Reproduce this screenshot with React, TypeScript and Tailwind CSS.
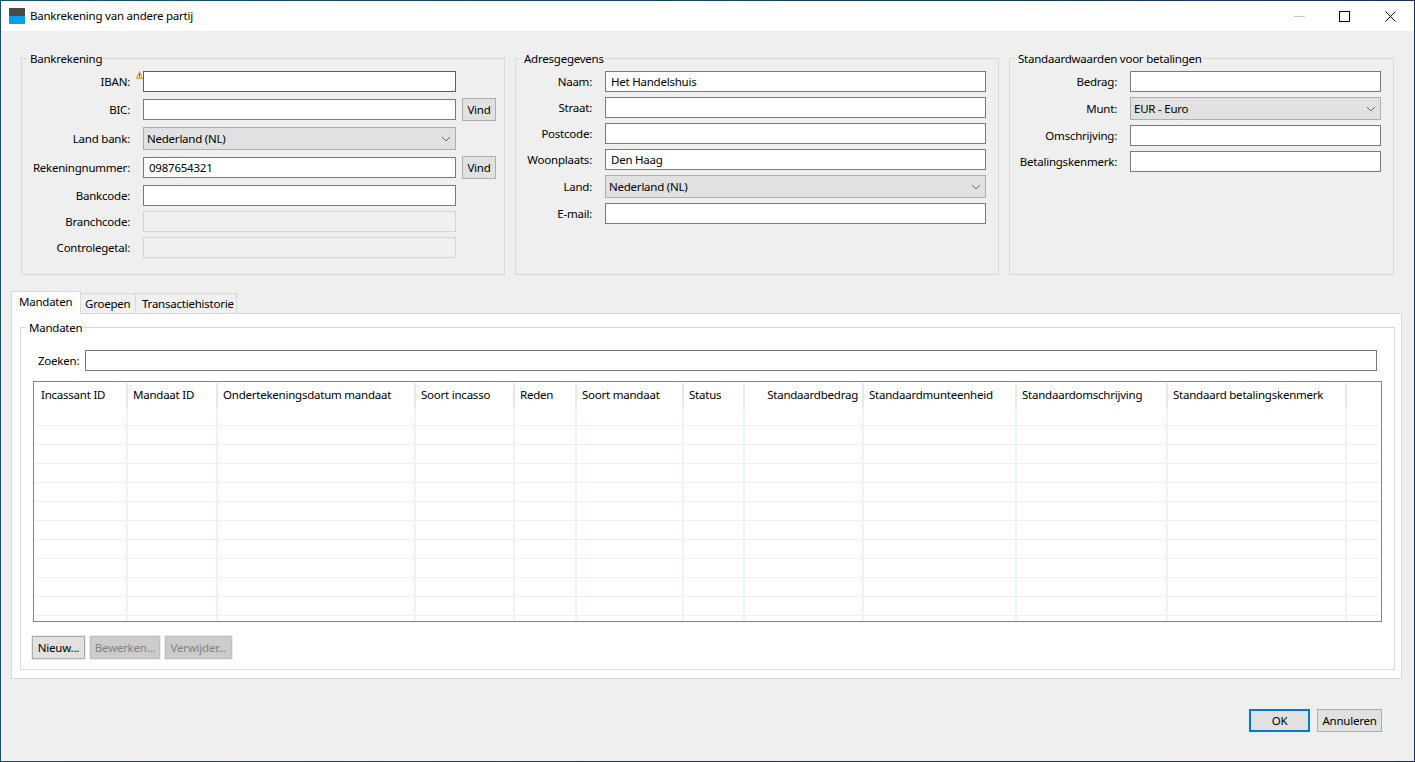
import React from "react";

function Chevron() {
  return (
    <svg width="10" height="6" viewBox="0 0 10 6" fill="none" className="shrink-0">
      <path d="M1 1l4 4 4-4" stroke="#6a6a6a" strokeWidth="1" />
    </svg>
  );
}

function TextBox({ value = "", className = "", focused = false, disabled = false }: { value?: string; className?: string; focused?: boolean; disabled?: boolean }) {
  const tone = disabled ? "border-[#d4d4d4] bg-[#f0f0f0]" : focused ? "border-[#0078d7] bg-white" : "border-[#7a7a7a] bg-white";
  return <input readOnly value={value} className={`h-[21px] border pl-[5px] text-black outline-none ${tone} ${className}`} />;
}

function Select({ value, className = "" }: { value: string; className?: string }) {
  return (
    <div className={`flex h-[23px] items-center justify-between border border-[#adadad] bg-[#e1e1e1] pl-[3px] pr-[4px] text-black ${className}`}>
      <span>{value}</span>
      <Chevron />
    </div>
  );
}

function Row({ label, labelW, className = "", gap, children }: { label: string; labelW: string; className?: string; gap: string; children: React.ReactNode }) {
  return (
    <div className={`flex h-[21px] items-center ${className}`}>
      <span className={`shrink-0 whitespace-nowrap text-right ${labelW} ${gap}`}>{label}</span>
      {children}
    </div>
  );
}

function Group({ title, className, children }: { title: string; className: string; children: React.ReactNode }) {
  return (
    <fieldset className={`border border-[#d9d9d9] ${className}`}>
      <legend className="ml-[5px] h-[17px] pl-[3px] pr-[1px] leading-[17px]">{title}</legend>
      {children}
    </fieldset>
  );
}

function Btn({ children, className = "border-[#adadad] bg-[#e1e1e1]" }: { children: React.ReactNode; className?: string }) {
  return <div className={`flex h-[23px] shrink-0 items-center justify-center border ${className}`}>{children}</div>;
}

const cols = "grid grid-cols-[93px_90px_198px_99px_62px_107px_61px_119px_153px_151px_179px_1fr]";
const headers = ["Incassant ID", "Mandaat ID", "Ondertekeningsdatum mandaat", "Soort incasso", "Reden", "Soort mandaat", "Status", "Standaardbedrag", "Standaardmunteenheid", "Standaardomschrijving", "Standaard betalingskenmerk", ""];

export default function App() {
  const l1 = "w-[108px]";
  const g1 = "mr-[13px]";
  const l2 = "w-[76px]";
  const g2 = "mr-[13px]";
  const l3 = "w-[107px]";
  const g3 = "mr-[13px]";
  return (
    <div className="h-[762px] w-[1415px] overflow-hidden bg-gradient-to-r from-[#125270] to-[#1a2f60] p-px font-['Noto_Sans','Open_Sans',sans-serif] text-[11.5px] tracking-[-0.23px] text-black">
      <div className="flex h-[760px] flex-col bg-[#efefef]">
        <div className="flex h-[30px] shrink-0 items-center bg-white pl-[8px]">
          <div className="flex h-[16px] w-[16px] flex-col">
            <div className="h-[8px] bg-[#4a4a4a]" />
            <div className="h-[8px] bg-[#00a2e8]" />
          </div>
          <span className="ml-[5px]">Bankrekening van andere partij</span>
          <div className="ml-auto flex items-center pr-[18px]">
            <svg width="11" height="11" viewBox="0 0 11 11" className="mr-[34px]"><path d="M0 5.5h11" stroke="#c8c8c8" /></svg>
            <svg width="11" height="11" viewBox="0 0 11 11" className="mr-[35px]"><rect x="0.5" y="0.5" width="10" height="10" fill="none" stroke="#000" /></svg>
            <svg width="11" height="11" viewBox="0 0 11 11"><path d="M0.5 0.5l10 10M10.5 0.5l-10 10" stroke="#000" /></svg>
          </div>
        </div>

        <div className="ml-[20px] mt-[19px] flex gap-[10px]">
          <Group title="Bankrekening" className="relative h-[225px] w-[484px] pt-[4px]">
            <svg width="7" height="8" viewBox="0 0 7 8" className="absolute left-[114px] top-[4px]">
              <path d="M3.5 0.6L6.5 7.4H0.5Z" fill="#fbe3a4" stroke="#d9983a" strokeWidth="1" strokeLinejoin="round" />
              <path d="M3.5 2.6v2.4M3.5 5.7v1" stroke="#7a5214" strokeWidth="1" />
            </svg>
            <Row label="IBAN:" labelW={l1} gap={g1}><TextBox focused className="w-[313px]" /></Row>
            <Row label="BIC:" labelW={l1} gap={g1} className="mt-[7px]">
              <TextBox className="w-[313px]" />
              <div className="ml-[6px]"><Btn className="w-[34px] border-[#adadad] bg-[#e1e1e1]">Vind</Btn></div>
            </Row>
            <Row label="Land bank:" labelW={l1} gap={g1} className="mt-[8px]"><Select value="Nederland (NL)" className="w-[313px]" /></Row>
            <Row label="Rekeningnummer:" labelW={l1} gap={g1} className="mt-[8px]">
              <TextBox value="0987654321" className="w-[313px]" />
              <div className="ml-[6px]"><Btn className="w-[34px] border-[#adadad] bg-[#e1e1e1]">Vind</Btn></div>
            </Row>
            <Row label="Bankcode:" labelW={l1} gap={g1} className="mt-[7px]"><TextBox className="w-[313px]" /></Row>
            <Row label="Branchcode:" labelW={l1} gap={g1} className="mt-[5px]"><TextBox disabled className="w-[313px]" /></Row>
            <Row label="Controlegetal:" labelW={l1} gap={g1} className="mt-[5px]"><TextBox disabled className="w-[313px]" /></Row>
          </Group>

          <Group title="Adresgegevens" className="h-[225px] w-[484px] pt-[4px]">
            <Row label="Naam:" labelW={l2} gap={g2}><TextBox value="Het Handelshuis" className="w-[381px]" /></Row>
            <Row label="Straat:" labelW={l2} gap={g2} className="mt-[5px]"><TextBox className="w-[381px]" /></Row>
            <Row label="Postcode:" labelW={l2} gap={g2} className="mt-[5px]"><TextBox className="w-[381px]" /></Row>
            <Row label="Woonplaats:" labelW={l2} gap={g2} className="mt-[5px]"><TextBox value="Den Haag" className="w-[381px]" /></Row>
            <Row label="Land:" labelW={l2} gap={g2} className="mt-[6px]"><Select value="Nederland (NL)" className="w-[381px]" /></Row>
            <Row label="E-mail:" labelW={l2} gap={g2} className="mt-[6px]"><TextBox className="w-[381px]" /></Row>
          </Group>

          <Group title="Standaardwaarden voor betalingen" className="h-[225px] w-[385px] pt-[4px]">
            <Row label="Bedrag:" labelW={l3} gap={g3}><TextBox className="w-[251px]" /></Row>
            <Row label="Munt:" labelW={l3} gap={g3} className="mt-[6px]"><Select value="EUR - Euro" className="w-[251px]" /></Row>
            <Row label="Omschrijving:" labelW={l3} gap={g3} className="mt-[6px]"><TextBox className="w-[251px]" /></Row>
            <Row label="Betalingskenmerk:" labelW={l3} gap={g3} className="mt-[5px]"><TextBox className="w-[251px]" /></Row>
          </Group>
        </div>

        <div className="relative z-10 ml-[10px] mt-[16px] flex h-[22px] items-end">
          <div className="-mb-px h-[23px] w-[70px] border border-b-0 border-[#d9d9d9] bg-white pl-[7px] leading-[20px]">Mandaten</div>
          <div className="h-[20px] w-[55px] border border-l-0 border-b-0 border-[#d9d9d9] bg-[#f0f0f0] pl-[4px] leading-[20px]">Groepen</div>
          <div className="h-[20px] w-[101px] border border-l-0 border-b-0 border-[#d9d9d9] bg-[#f0f0f0] pl-[6px] leading-[20px]">Transactiehistorie</div>
        </div>

        <div className="ml-[10px] h-[366px] w-[1391px] border border-[#d9d9d9] bg-white pl-[8px] pt-[5px]">
          <Group title="Mandaten" className="h-[351px] w-[1375px]">
            <div className="mt-[14px] flex h-[21px] items-center pl-[17px]">
              <span className="mr-[5px] w-[42px] shrink-0 whitespace-nowrap">Zoeken:</span>
              <TextBox className="w-[1292px]" />
            </div>
            <div className="ml-[12px] mt-[10px] h-[241px] w-[1349px] overflow-hidden border border-[#82828a] bg-white px-px">
              <div className={`${cols} h-[25px] pt-px`}>
                {headers.map((h, i) => (
                  <div key={i} className={`flex items-center whitespace-nowrap ${i === 11 ? "" : "border-r-2 border-[#e8e8e8]"} ${i === 0 ? "pl-[6px]" : "pl-[5px]"} ${i === 7 ? "justify-end pr-[4px]" : ""}`}>
                    {h}
                  </div>
                ))}
              </div>
              <div className="h-[214px] overflow-hidden">
                {Array.from({ length: 12 }).map((_, r) => (
                  <div key={r} className={`${cols} h-[19px]`}>
                    {headers.map((_h, i) => (
                      <div key={i} className={`border-b border-[#f0f0f0] ${i === 11 ? "" : "border-r-2 border-r-[#eef3fb]"}`} />
                    ))}
                  </div>
                ))}
              </div>
            </div>
            <div className="ml-[11px] mt-[14px] flex gap-[5px]">
              <Btn className="w-[53px] border-[#adadad] bg-[#e1e1e1] ring-1 ring-[#ececec]">Nieuw...</Btn>
              <Btn className="w-[70px] border-[#bfbfbf] bg-[#cccccc] text-[#838383] ring-1 ring-[#ececec]">Bewerken...</Btn>
              <Btn className="w-[67px] border-[#bfbfbf] bg-[#cccccc] text-[#838383] ring-1 ring-[#ececec]">Verwijder...</Btn>
            </div>
          </Group>
        </div>

        <div className="mt-[30px] flex justify-end gap-[7px] pr-[32px]">
          <Btn className="w-[61px] border-2 border-[#0078d7] bg-[#e1e1e1]">OK</Btn>
          <Btn className="w-[65px] border-[#adadad] bg-[#e1e1e1]">Annuleren</Btn>
        </div>
      </div>
    </div>
  );
}
